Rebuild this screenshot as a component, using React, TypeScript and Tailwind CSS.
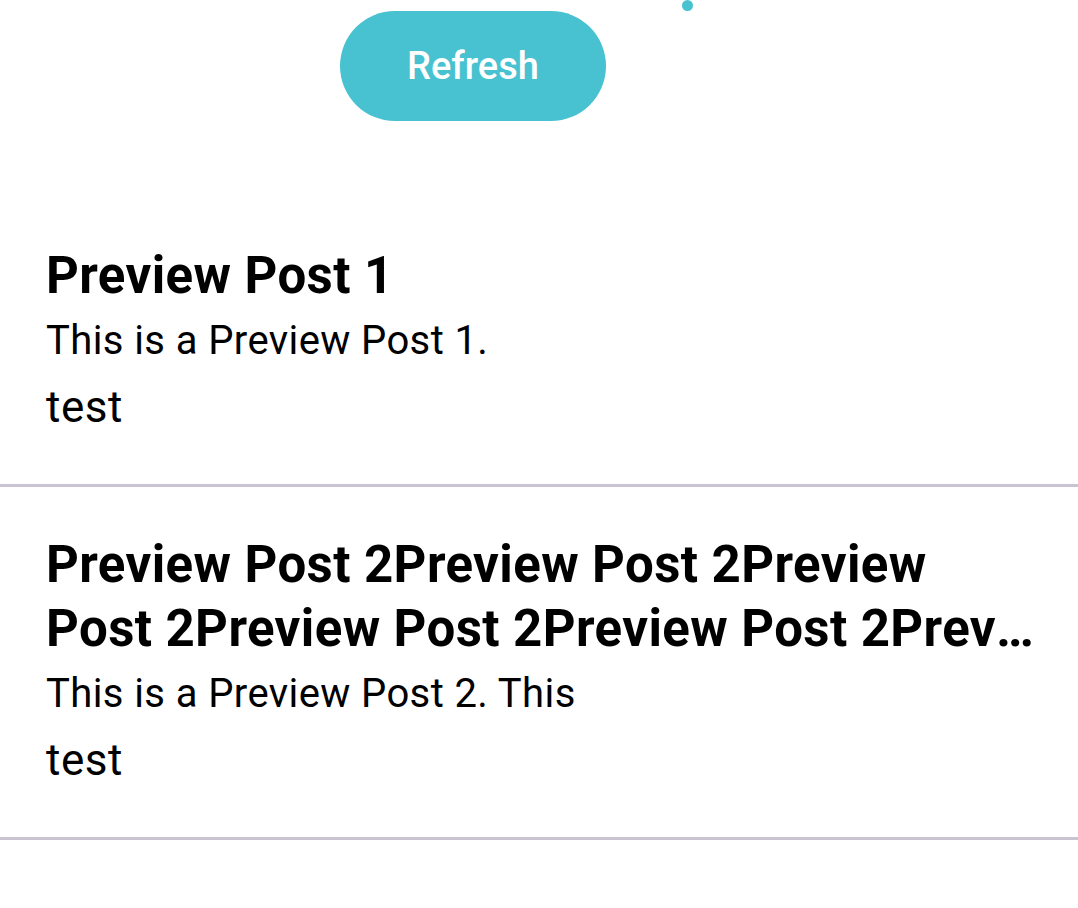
import React from "react";

type Post = { id: number; title: string[]; body: string; tag: string };

// the title is stored as the lines it wraps into; the last line gets the ellipsis
const posts: Post[] = [
  { id: 1, title: ["Preview Post 1"], body: "This is a Preview Post 1.", tag: "test" },
  {
    id: 2,
    title: [
      "Preview Post 2Preview Post 2Preview",
      "Post 2Preview Post 2Preview Post 2Preview Post 2Preview Post 2Preview Post 2",
    ],
    body: "This is a Preview Post 2. This is a Preview Post 2. This is a Preview Post 2.",
    tag: "test",
  },
];

function PostRow({ post }: { post: Post }) {
  return (
    <div className="border-b-[3px] border-[#cac4d0] pl-[46px] pr-[40px] pt-[46px] pb-[47px]">
      <h2 className="text-[51px] font-bold leading-[64px] tracking-[0.4px] text-black">
        {post.title.map((line, i) => (
          <span key={i} className="block truncate">
            {line}
          </span>
        ))}
      </h2>
      <p className="mt-[2px] w-[535px] overflow-hidden whitespace-nowrap text-[40px] leading-[62px] tracking-[0.4px] text-black">
        {post.body}
      </p>
      <p className="mt-[5px] text-[44px] leading-[60px] tracking-[0.5px] text-black">
        {post.tag}
      </p>
    </div>
  );
}

export default function App() {
  return (
    <div className="min-h-[908px] bg-white font-['Roboto',sans-serif]">
      <div className="flex items-start pl-[340px]">
        <button className="mt-[11px] h-[110px] w-[266px] rounded-full bg-[#48c2d0] text-[38px] font-medium text-white">
          Refresh
        </button>
        <span className="ml-[76px] h-[11px] w-[11px] rounded-full bg-[#48c2d0]" />
      </div>
      <div className="mt-[77px]">
        {posts.map((post) => (
          <PostRow key={post.id} post={post} />
        ))}
      </div>
    </div>
  );
}
